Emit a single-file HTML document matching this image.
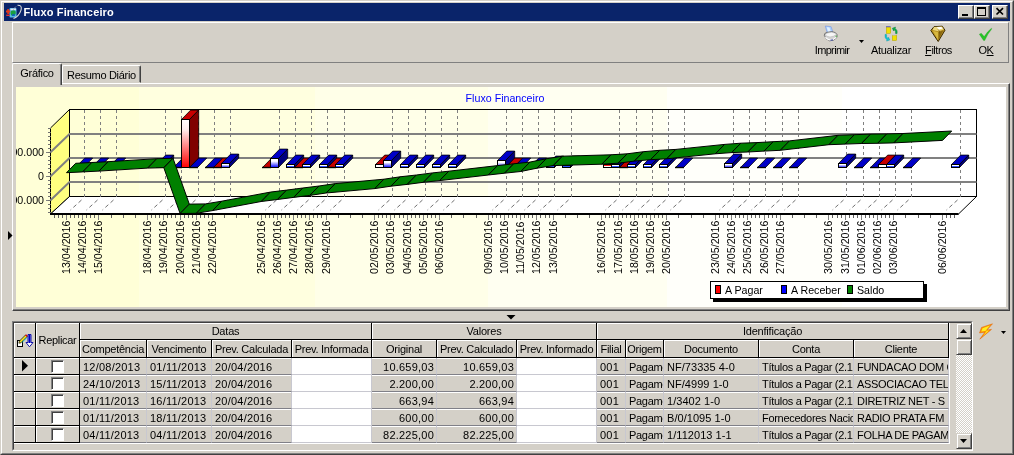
<!DOCTYPE html>
<html><head><meta charset="utf-8"><title>Fluxo Financeiro</title>
<style>
html,body{margin:0;padding:0}
body{width:1014px;height:455px;background:#d4d0c8;font-family:"Liberation Sans",sans-serif;font-size:11px;color:#000;position:relative;overflow:hidden}
div{position:absolute;box-sizing:border-box}
svg text{font-family:"Liberation Sans",sans-serif}
.title{left:4px;top:3px;width:1006px;height:18px;background:#0a246a}
.title b{position:absolute;left:19.5px;top:3px;color:#fff;font-size:11px;font-weight:bold;letter-spacing:.15px}
.wb{top:5px;width:16px;height:14px;background:#d4d0c8;border:1px solid;border-color:#fff #404040 #404040 #fff;box-shadow:inset -1px -1px 0 #808080}
.h{background:#d4d0c8;border-right:1px solid #000;border-bottom:1px solid #000;box-shadow:inset 1px 1px 0 #fff;text-align:center;white-space:nowrap;overflow:hidden}
.c{background:#d4d0c8;border-right:1px solid #c8c8d0;border-bottom:1px solid #808088;box-shadow:inset 0 1px 0 #fff;line-height:18px;padding-left:3px;white-space:nowrap;overflow:hidden;letter-spacing:-.3px}
.c.w{background:#fff;border-bottom-color:#c8c8d0}
.c.r{text-align:right;padding-right:2px}
.c.n{letter-spacing:.22px}
.c.d{letter-spacing:.05px}
.cb{position:absolute;left:15px;top:2px;width:13px;height:13px;background:#fff;border:1px solid;border-color:#808080 #fff #fff #808080;box-shadow:inset 1px 1px 0 #404040;box-sizing:border-box}
.sb{width:16px;height:16px;background:#d4d0c8;border:1px solid;border-color:#d4d0c8 #404040 #404040 #d4d0c8;box-shadow:inset 1px 1px 0 #fff,inset -1px -1px 0 #808080}
.tb{text-align:center;white-space:nowrap}
</style></head><body>
<div id="w" style="left:0;top:0;width:1014px;height:455px;will-change:transform">
<!-- window frame -->
<div style="left:0;top:0;width:1014px;height:455px;border:1px solid;border-color:#d4d0c8 #404040 #404040 #d4d0c8"></div>
<div style="left:1px;top:1px;width:1012px;height:453px;border:1px solid;border-color:#fff #808080 #808080 #fff"></div>
<div class="title"><b>Fluxo Financeiro</b></div>
<div class="wb" style="left:958px"></div><div class="wb" style="left:974px"></div><div class="wb" style="left:992px"></div>
<!-- toolbar -->
<div style="left:12px;top:22px;width:997px;height:41px;border:1px solid;border-color:#fff #808080 #808080 #fff"></div>
<div class="tb" style="left:805px;top:44px;width:54px;letter-spacing:-.65px">Imprimir</div>
<div class="tb" style="left:864px;top:44px;width:54px;letter-spacing:-.3px">Atualizar</div>
<div class="tb" style="left:918.5px;top:44px;width:40px;letter-spacing:-.45px"><u>F</u>iltros</div>
<div class="tb" style="left:966px;top:44px;width:40px;letter-spacing:-.4px">O<u>K</u></div>
<!-- tabs -->
<div style="left:12px;top:83px;width:998px;height:228px;border:1px solid;border-color:#fff #404040 #404040 #fff;box-shadow:inset -1px -1px 0 #808080"></div>
<div style="left:62px;top:65px;width:79px;height:18px;border:1px solid;border-color:#fff #404040 transparent #fff;border-radius:2px 2px 0 0;box-shadow:inset -1px 0 0 #808080;text-align:center;line-height:19px;letter-spacing:-.3px">Resumo Diário</div>
<div style="left:12px;top:63px;width:50px;height:22px;background:#d4d0c8;border:1px solid;border-color:#fff #404040 #d4d0c8 #fff;border-bottom:none;border-radius:2px 2px 0 0;box-shadow:inset -1px 0 0 #808080;text-align:center;line-height:18px;letter-spacing:-.3px">Gráfico</div>
<!-- chart panel -->
<div style="left:16px;top:87px;width:990px;height:220px;background:linear-gradient(to right,#ffffd7 123px,#ffffdf 123px,#ffffdf 299px,#ffffe8 299px,#ffffe8 472px,#fffff1 472px,#fffff1 651px,#fffffa 651px,#fffffa 826px,#fff 826px)"></div>
<svg width="1014" height="455" viewBox="0 0 1014 455" style="position:absolute;left:0;top:0">
<defs><linearGradient id="gr" x1="0" y1="0" x2="0" y2="1"><stop offset="0" stop-color="#fff"/><stop offset="0.2" stop-color="#fff0f0"/><stop offset="1" stop-color="#f00"/></linearGradient><linearGradient id="gb" x1="0" y1="0" x2="0" y2="1"><stop offset="0" stop-color="#fff"/><stop offset="0.3" stop-color="#fff"/><stop offset="1" stop-color="#00f"/></linearGradient><linearGradient id="gs" x1="0" y1="0" x2="0" y2="1"><stop offset="0.5" stop-color="#fff"/><stop offset="0.5" stop-color="#3050ff"/></linearGradient><linearGradient id="gt" x1="0" y1="0" x2="0" y2="1"><stop offset="0.5" stop-color="#ff2020"/><stop offset="0.5" stop-color="#fff"/></linearGradient></defs>
<polygon points="50.5,128.0 69.5,109.5 69.5,196.5 50.5,214.0" fill="#ffff80" stroke="#000" stroke-width="1"/>
<polygon points="50.5,214.0 69.5,196.5 976.5,196.5 958.5,214.0" fill="#fff" stroke="#000" stroke-width="1"/>
<rect x="69.5" y="109.5" width="907.0" height="87.0" fill="none" stroke="#000" stroke-width="1"/>
<line x1="84.5" y1="110.0" x2="84.5" y2="196.5" stroke="#808080" stroke-width="1" stroke-dasharray="3 3" shape-rendering="crispEdges"/>
<line x1="81.5" y1="200.0" x2="70.5" y2="210.0" stroke="#707070" stroke-width="1" stroke-dasharray="4 3"/>
<line x1="100.5" y1="110.0" x2="100.5" y2="196.5" stroke="#808080" stroke-width="1" stroke-dasharray="3 3" shape-rendering="crispEdges"/>
<line x1="97.5" y1="200.0" x2="86.5" y2="210.0" stroke="#707070" stroke-width="1" stroke-dasharray="4 3"/>
<line x1="116.5" y1="110.0" x2="116.5" y2="196.5" stroke="#808080" stroke-width="1" stroke-dasharray="3 3" shape-rendering="crispEdges"/>
<line x1="113.5" y1="200.0" x2="102.5" y2="210.0" stroke="#707070" stroke-width="1" stroke-dasharray="4 3"/>
<line x1="165.5" y1="110.0" x2="165.5" y2="196.5" stroke="#808080" stroke-width="1" stroke-dasharray="3 3" shape-rendering="crispEdges"/>
<line x1="162.5" y1="200.0" x2="151.5" y2="210.0" stroke="#707070" stroke-width="1" stroke-dasharray="4 3"/>
<line x1="181.5" y1="110.0" x2="181.5" y2="196.5" stroke="#808080" stroke-width="1" stroke-dasharray="3 3" shape-rendering="crispEdges"/>
<line x1="178.5" y1="200.0" x2="167.5" y2="210.0" stroke="#707070" stroke-width="1" stroke-dasharray="4 3"/>
<line x1="198.5" y1="110.0" x2="198.5" y2="196.5" stroke="#808080" stroke-width="1" stroke-dasharray="3 3" shape-rendering="crispEdges"/>
<line x1="195.5" y1="200.0" x2="184.5" y2="210.0" stroke="#707070" stroke-width="1" stroke-dasharray="4 3"/>
<line x1="214.5" y1="110.0" x2="214.5" y2="196.5" stroke="#808080" stroke-width="1" stroke-dasharray="3 3" shape-rendering="crispEdges"/>
<line x1="211.5" y1="200.0" x2="200.5" y2="210.0" stroke="#707070" stroke-width="1" stroke-dasharray="4 3"/>
<line x1="230.5" y1="110.0" x2="230.5" y2="196.5" stroke="#808080" stroke-width="1" stroke-dasharray="3 3" shape-rendering="crispEdges"/>
<line x1="227.5" y1="200.0" x2="216.5" y2="210.0" stroke="#707070" stroke-width="1" stroke-dasharray="4 3"/>
<line x1="279.5" y1="110.0" x2="279.5" y2="196.5" stroke="#808080" stroke-width="1" stroke-dasharray="3 3" shape-rendering="crispEdges"/>
<line x1="276.5" y1="200.0" x2="265.5" y2="210.0" stroke="#707070" stroke-width="1" stroke-dasharray="4 3"/>
<line x1="295.5" y1="110.0" x2="295.5" y2="196.5" stroke="#808080" stroke-width="1" stroke-dasharray="3 3" shape-rendering="crispEdges"/>
<line x1="292.5" y1="200.0" x2="281.5" y2="210.0" stroke="#707070" stroke-width="1" stroke-dasharray="4 3"/>
<line x1="311.5" y1="110.0" x2="311.5" y2="196.5" stroke="#808080" stroke-width="1" stroke-dasharray="3 3" shape-rendering="crispEdges"/>
<line x1="308.5" y1="200.0" x2="297.5" y2="210.0" stroke="#707070" stroke-width="1" stroke-dasharray="4 3"/>
<line x1="327.5" y1="110.0" x2="327.5" y2="196.5" stroke="#808080" stroke-width="1" stroke-dasharray="3 3" shape-rendering="crispEdges"/>
<line x1="324.5" y1="200.0" x2="313.5" y2="210.0" stroke="#707070" stroke-width="1" stroke-dasharray="4 3"/>
<line x1="344.5" y1="110.0" x2="344.5" y2="196.5" stroke="#808080" stroke-width="1" stroke-dasharray="3 3" shape-rendering="crispEdges"/>
<line x1="341.5" y1="200.0" x2="330.5" y2="210.0" stroke="#707070" stroke-width="1" stroke-dasharray="4 3"/>
<line x1="392.5" y1="110.0" x2="392.5" y2="196.5" stroke="#808080" stroke-width="1" stroke-dasharray="3 3" shape-rendering="crispEdges"/>
<line x1="389.5" y1="200.0" x2="378.5" y2="210.0" stroke="#707070" stroke-width="1" stroke-dasharray="4 3"/>
<line x1="408.5" y1="110.0" x2="408.5" y2="196.5" stroke="#808080" stroke-width="1" stroke-dasharray="3 3" shape-rendering="crispEdges"/>
<line x1="405.5" y1="200.0" x2="394.5" y2="210.0" stroke="#707070" stroke-width="1" stroke-dasharray="4 3"/>
<line x1="425.5" y1="110.0" x2="425.5" y2="196.5" stroke="#808080" stroke-width="1" stroke-dasharray="3 3" shape-rendering="crispEdges"/>
<line x1="422.5" y1="200.0" x2="411.5" y2="210.0" stroke="#707070" stroke-width="1" stroke-dasharray="4 3"/>
<line x1="441.5" y1="110.0" x2="441.5" y2="196.5" stroke="#808080" stroke-width="1" stroke-dasharray="3 3" shape-rendering="crispEdges"/>
<line x1="438.5" y1="200.0" x2="427.5" y2="210.0" stroke="#707070" stroke-width="1" stroke-dasharray="4 3"/>
<line x1="457.5" y1="110.0" x2="457.5" y2="196.5" stroke="#808080" stroke-width="1" stroke-dasharray="3 3" shape-rendering="crispEdges"/>
<line x1="454.5" y1="200.0" x2="443.5" y2="210.0" stroke="#707070" stroke-width="1" stroke-dasharray="4 3"/>
<line x1="506.5" y1="110.0" x2="506.5" y2="196.5" stroke="#808080" stroke-width="1" stroke-dasharray="3 3" shape-rendering="crispEdges"/>
<line x1="503.5" y1="200.0" x2="492.5" y2="210.0" stroke="#707070" stroke-width="1" stroke-dasharray="4 3"/>
<line x1="522.5" y1="110.0" x2="522.5" y2="196.5" stroke="#808080" stroke-width="1" stroke-dasharray="3 3" shape-rendering="crispEdges"/>
<line x1="519.5" y1="200.0" x2="508.5" y2="210.0" stroke="#707070" stroke-width="1" stroke-dasharray="4 3"/>
<line x1="538.5" y1="110.0" x2="538.5" y2="196.5" stroke="#808080" stroke-width="1" stroke-dasharray="3 3" shape-rendering="crispEdges"/>
<line x1="535.5" y1="200.0" x2="524.5" y2="210.0" stroke="#707070" stroke-width="1" stroke-dasharray="4 3"/>
<line x1="554.5" y1="110.0" x2="554.5" y2="196.5" stroke="#808080" stroke-width="1" stroke-dasharray="3 3" shape-rendering="crispEdges"/>
<line x1="551.5" y1="200.0" x2="540.5" y2="210.0" stroke="#707070" stroke-width="1" stroke-dasharray="4 3"/>
<line x1="571.5" y1="110.0" x2="571.5" y2="196.5" stroke="#808080" stroke-width="1" stroke-dasharray="3 3" shape-rendering="crispEdges"/>
<line x1="568.5" y1="200.0" x2="557.5" y2="210.0" stroke="#707070" stroke-width="1" stroke-dasharray="4 3"/>
<line x1="619.5" y1="110.0" x2="619.5" y2="196.5" stroke="#808080" stroke-width="1" stroke-dasharray="3 3" shape-rendering="crispEdges"/>
<line x1="616.5" y1="200.0" x2="605.5" y2="210.0" stroke="#707070" stroke-width="1" stroke-dasharray="4 3"/>
<line x1="636.5" y1="110.0" x2="636.5" y2="196.5" stroke="#808080" stroke-width="1" stroke-dasharray="3 3" shape-rendering="crispEdges"/>
<line x1="633.5" y1="200.0" x2="622.5" y2="210.0" stroke="#707070" stroke-width="1" stroke-dasharray="4 3"/>
<line x1="652.5" y1="110.0" x2="652.5" y2="196.5" stroke="#808080" stroke-width="1" stroke-dasharray="3 3" shape-rendering="crispEdges"/>
<line x1="649.5" y1="200.0" x2="638.5" y2="210.0" stroke="#707070" stroke-width="1" stroke-dasharray="4 3"/>
<line x1="668.5" y1="110.0" x2="668.5" y2="196.5" stroke="#808080" stroke-width="1" stroke-dasharray="3 3" shape-rendering="crispEdges"/>
<line x1="665.5" y1="200.0" x2="654.5" y2="210.0" stroke="#707070" stroke-width="1" stroke-dasharray="4 3"/>
<line x1="684.5" y1="110.0" x2="684.5" y2="196.5" stroke="#808080" stroke-width="1" stroke-dasharray="3 3" shape-rendering="crispEdges"/>
<line x1="681.5" y1="200.0" x2="670.5" y2="210.0" stroke="#707070" stroke-width="1" stroke-dasharray="4 3"/>
<line x1="733.5" y1="110.0" x2="733.5" y2="196.5" stroke="#808080" stroke-width="1" stroke-dasharray="3 3" shape-rendering="crispEdges"/>
<line x1="730.5" y1="200.0" x2="719.5" y2="210.0" stroke="#707070" stroke-width="1" stroke-dasharray="4 3"/>
<line x1="749.5" y1="110.0" x2="749.5" y2="196.5" stroke="#808080" stroke-width="1" stroke-dasharray="3 3" shape-rendering="crispEdges"/>
<line x1="746.5" y1="200.0" x2="735.5" y2="210.0" stroke="#707070" stroke-width="1" stroke-dasharray="4 3"/>
<line x1="765.5" y1="110.0" x2="765.5" y2="196.5" stroke="#808080" stroke-width="1" stroke-dasharray="3 3" shape-rendering="crispEdges"/>
<line x1="762.5" y1="200.0" x2="751.5" y2="210.0" stroke="#707070" stroke-width="1" stroke-dasharray="4 3"/>
<line x1="782.5" y1="110.0" x2="782.5" y2="196.5" stroke="#808080" stroke-width="1" stroke-dasharray="3 3" shape-rendering="crispEdges"/>
<line x1="779.5" y1="200.0" x2="768.5" y2="210.0" stroke="#707070" stroke-width="1" stroke-dasharray="4 3"/>
<line x1="798.5" y1="110.0" x2="798.5" y2="196.5" stroke="#808080" stroke-width="1" stroke-dasharray="3 3" shape-rendering="crispEdges"/>
<line x1="795.5" y1="200.0" x2="784.5" y2="210.0" stroke="#707070" stroke-width="1" stroke-dasharray="4 3"/>
<line x1="846.5" y1="110.0" x2="846.5" y2="196.5" stroke="#808080" stroke-width="1" stroke-dasharray="3 3" shape-rendering="crispEdges"/>
<line x1="843.5" y1="200.0" x2="832.5" y2="210.0" stroke="#707070" stroke-width="1" stroke-dasharray="4 3"/>
<line x1="863.5" y1="110.0" x2="863.5" y2="196.5" stroke="#808080" stroke-width="1" stroke-dasharray="3 3" shape-rendering="crispEdges"/>
<line x1="860.5" y1="200.0" x2="849.5" y2="210.0" stroke="#707070" stroke-width="1" stroke-dasharray="4 3"/>
<line x1="879.5" y1="110.0" x2="879.5" y2="196.5" stroke="#808080" stroke-width="1" stroke-dasharray="3 3" shape-rendering="crispEdges"/>
<line x1="876.5" y1="200.0" x2="865.5" y2="210.0" stroke="#707070" stroke-width="1" stroke-dasharray="4 3"/>
<line x1="895.5" y1="110.0" x2="895.5" y2="196.5" stroke="#808080" stroke-width="1" stroke-dasharray="3 3" shape-rendering="crispEdges"/>
<line x1="892.5" y1="200.0" x2="881.5" y2="210.0" stroke="#707070" stroke-width="1" stroke-dasharray="4 3"/>
<line x1="911.5" y1="110.0" x2="911.5" y2="196.5" stroke="#808080" stroke-width="1" stroke-dasharray="3 3" shape-rendering="crispEdges"/>
<line x1="908.5" y1="200.0" x2="897.5" y2="210.0" stroke="#707070" stroke-width="1" stroke-dasharray="4 3"/>
<line x1="960.5" y1="110.0" x2="960.5" y2="196.5" stroke="#808080" stroke-width="1" stroke-dasharray="3 3" shape-rendering="crispEdges"/>
<line x1="957.5" y1="200.0" x2="946.5" y2="210.0" stroke="#707070" stroke-width="1" stroke-dasharray="4 3"/>
<polyline points="50.5,152.2 69.5,134.0 976.5,134.0" fill="none" stroke="#808080" stroke-width="2"/>
<polyline points="50.5,176.2 69.5,158.0 976.5,158.0" fill="none" stroke="#808080" stroke-width="2"/>
<polyline points="50.5,200.2 69.5,182.0 976.5,182.0" fill="none" stroke="#808080" stroke-width="2"/>
<line x1="50.0" y1="214.0" x2="958.5" y2="214.0" stroke="#000" stroke-width="2"/>
<polygon points="75.5,167.5 84.7,158.1 92.7,158.1 83.5,167.5" fill="#0000c8" stroke="#000" stroke-width="0.8"/><line x1="75.0" y1="167.5" x2="84.0" y2="167.5" stroke="#000" stroke-width="1.4"/>
<polygon points="91.5,167.5 100.7,158.1 108.7,158.1 99.5,167.5" fill="#0000c8" stroke="#000" stroke-width="0.8"/><line x1="91.0" y1="167.5" x2="100.0" y2="167.5" stroke="#000" stroke-width="1.4"/>
<polygon points="108.5,167.5 117.7,158.1 125.7,158.1 116.5,167.5" fill="#0000c8" stroke="#000" stroke-width="0.8"/><line x1="108.0" y1="167.5" x2="117.0" y2="167.5" stroke="#000" stroke-width="1.4"/>
<polygon points="156.5,164.5 165.7,155.1 173.7,155.1 164.5,164.5" fill="#0000c8" stroke="#000" stroke-width="0.8"/><polygon points="164.5,164.5 173.7,155.1 173.7,158.1 164.5,167.5" fill="#000080" stroke="#000" stroke-width="0.8"/><rect x="156.5" y="164.5" width="8" height="3.0" fill="#fff" stroke="#000" stroke-width="1"/>
<polygon points="173.5,167.5 182.7,158.1 190.7,158.1 181.5,167.5" fill="#0000c8" stroke="#000" stroke-width="0.8"/><line x1="173.0" y1="167.5" x2="182.0" y2="167.5" stroke="#000" stroke-width="1.4"/>
<polygon points="181.5,119.5 190.7,110.1 198.7,110.1 189.5,119.5" fill="#c80000" stroke="#000" stroke-width="0.8"/><polygon points="189.5,119.5 198.7,110.1 198.7,158.1 189.5,167.5" fill="#800000" stroke="#000" stroke-width="0.8"/><rect x="181.5" y="119.5" width="8" height="48.0" fill="url(#gr)" stroke="#000" stroke-width="1"/>
<polygon points="189.5,167.5 198.7,158.1 206.7,158.1 197.5,167.5" fill="#0000c8" stroke="#000" stroke-width="0.8"/><line x1="189.0" y1="167.5" x2="198.0" y2="167.5" stroke="#000" stroke-width="1.4"/>
<polygon points="205.5,167.5 214.7,158.1 222.7,158.1 213.5,167.5" fill="#0000c8" stroke="#000" stroke-width="0.8"/><line x1="205.0" y1="167.5" x2="214.0" y2="167.5" stroke="#000" stroke-width="1.4"/>
<polygon points="213.5,167.5 222.7,158.1 230.7,158.1 221.5,167.5" fill="#c80000" stroke="#000" stroke-width="0.8"/><line x1="213.0" y1="167.5" x2="222.0" y2="167.5" stroke="#000" stroke-width="1.4"/>
<polygon points="221.5,163.5 230.7,154.1 238.7,154.1 229.5,163.5" fill="#0000c8" stroke="#000" stroke-width="0.8"/><polygon points="229.5,163.5 238.7,154.1 238.7,158.1 229.5,167.5" fill="#000080" stroke="#000" stroke-width="0.8"/><rect x="221.5" y="163.5" width="8" height="4.0" fill="url(#gb)" stroke="#000" stroke-width="1"/>
<polygon points="262.5,167.5 271.7,158.1 279.7,158.1 270.5,167.5" fill="#c80000" stroke="#000" stroke-width="0.8"/><line x1="262.0" y1="167.5" x2="271.0" y2="167.5" stroke="#000" stroke-width="1.4"/>
<polygon points="270.5,158.5 279.7,149.1 287.7,149.1 278.5,158.5" fill="#0000c8" stroke="#000" stroke-width="0.8"/><polygon points="278.5,158.5 287.7,149.1 287.7,158.1 278.5,167.5" fill="#000080" stroke="#000" stroke-width="0.8"/><rect x="270.5" y="158.5" width="8" height="9.0" fill="url(#gb)" stroke="#000" stroke-width="1"/>
<polygon points="286.5,164.5 295.7,155.1 303.7,155.1 294.5,164.5" fill="#0000c8" stroke="#000" stroke-width="0.8"/><polygon points="294.5,164.5 303.7,155.1 303.7,158.1 294.5,167.5" fill="#000080" stroke="#000" stroke-width="0.8"/><rect x="286.5" y="164.5" width="8" height="3.0" fill="url(#gs)" stroke="#000" stroke-width="1"/>
<polygon points="294.5,167.5 303.7,158.1 311.7,158.1 302.5,167.5" fill="#c80000" stroke="#000" stroke-width="0.8"/><line x1="294.0" y1="167.5" x2="303.0" y2="167.5" stroke="#000" stroke-width="1.4"/>
<polygon points="302.5,164.5 311.7,155.1 319.7,155.1 310.5,164.5" fill="#0000c8" stroke="#000" stroke-width="0.8"/><polygon points="310.5,164.5 319.7,155.1 319.7,158.1 310.5,167.5" fill="#000080" stroke="#000" stroke-width="0.8"/><rect x="302.5" y="164.5" width="8" height="3.0" fill="url(#gs)" stroke="#000" stroke-width="1"/>
<polygon points="319.5,164.5 328.7,155.1 336.7,155.1 327.5,164.5" fill="#0000c8" stroke="#000" stroke-width="0.8"/><polygon points="327.5,164.5 336.7,155.1 336.7,158.1 327.5,167.5" fill="#000080" stroke="#000" stroke-width="0.8"/><rect x="319.5" y="164.5" width="8" height="3.0" fill="url(#gs)" stroke="#000" stroke-width="1"/>
<polygon points="327.5,167.5 336.7,158.1 344.7,158.1 335.5,167.5" fill="#c80000" stroke="#000" stroke-width="0.8"/><line x1="327.0" y1="167.5" x2="336.0" y2="167.5" stroke="#000" stroke-width="1.4"/>
<polygon points="335.5,164.5 344.7,155.1 352.7,155.1 343.5,164.5" fill="#0000c8" stroke="#000" stroke-width="0.8"/><polygon points="343.5,164.5 352.7,155.1 352.7,158.1 343.5,167.5" fill="#000080" stroke="#000" stroke-width="0.8"/><rect x="335.5" y="164.5" width="8" height="3.0" fill="url(#gs)" stroke="#000" stroke-width="1"/>
<polygon points="375.5,164.5 384.7,155.1 392.7,155.1 383.5,164.5" fill="#c80000" stroke="#000" stroke-width="0.8"/><polygon points="383.5,164.5 392.7,155.1 392.7,158.1 383.5,167.5" fill="#800000" stroke="#000" stroke-width="0.8"/><rect x="375.5" y="164.5" width="8" height="3.0" fill="#fff" stroke="#000" stroke-width="1"/>
<polygon points="383.5,160.5 392.7,151.1 400.7,151.1 391.5,160.5" fill="#0000c8" stroke="#000" stroke-width="0.8"/><polygon points="391.5,160.5 400.7,151.1 400.7,158.1 391.5,167.5" fill="#000080" stroke="#000" stroke-width="0.8"/><rect x="383.5" y="160.5" width="8" height="7.0" fill="url(#gb)" stroke="#000" stroke-width="1"/>
<polygon points="400.5,164.5 409.7,155.1 417.7,155.1 408.5,164.5" fill="#0000c8" stroke="#000" stroke-width="0.8"/><polygon points="408.5,164.5 417.7,155.1 417.7,158.1 408.5,167.5" fill="#000080" stroke="#000" stroke-width="0.8"/><rect x="400.5" y="164.5" width="8" height="3.0" fill="url(#gs)" stroke="#000" stroke-width="1"/>
<polygon points="416.5,164.5 425.7,155.1 433.7,155.1 424.5,164.5" fill="#0000c8" stroke="#000" stroke-width="0.8"/><polygon points="424.5,164.5 433.7,155.1 433.7,158.1 424.5,167.5" fill="#000080" stroke="#000" stroke-width="0.8"/><rect x="416.5" y="164.5" width="8" height="3.0" fill="url(#gs)" stroke="#000" stroke-width="1"/>
<polygon points="432.5,164.5 441.7,155.1 449.7,155.1 440.5,164.5" fill="#0000c8" stroke="#000" stroke-width="0.8"/><polygon points="440.5,164.5 449.7,155.1 449.7,158.1 440.5,167.5" fill="#000080" stroke="#000" stroke-width="0.8"/><rect x="432.5" y="164.5" width="8" height="3.0" fill="url(#gs)" stroke="#000" stroke-width="1"/>
<polygon points="448.5,164.5 457.7,155.1 465.7,155.1 456.5,164.5" fill="#0000c8" stroke="#000" stroke-width="0.8"/><polygon points="456.5,164.5 465.7,155.1 465.7,158.1 456.5,167.5" fill="#000080" stroke="#000" stroke-width="0.8"/><rect x="448.5" y="164.5" width="8" height="3.0" fill="url(#gs)" stroke="#000" stroke-width="1"/>
<polygon points="497.5,160.5 506.7,151.1 514.7,151.1 505.5,160.5" fill="#0000c8" stroke="#000" stroke-width="0.8"/><polygon points="505.5,160.5 514.7,151.1 514.7,158.1 505.5,167.5" fill="#000080" stroke="#000" stroke-width="0.8"/><rect x="497.5" y="160.5" width="8" height="7.0" fill="url(#gb)" stroke="#000" stroke-width="1"/>
<polygon points="505.5,167.5 514.7,158.1 522.7,158.1 513.5,167.5" fill="#c80000" stroke="#000" stroke-width="0.8"/><line x1="505.0" y1="167.5" x2="514.0" y2="167.5" stroke="#000" stroke-width="1.4"/>
<polygon points="513.5,167.5 522.7,158.1 530.7,158.1 521.5,167.5" fill="#0000c8" stroke="#000" stroke-width="0.8"/><line x1="513.0" y1="167.5" x2="522.0" y2="167.5" stroke="#000" stroke-width="1.4"/>
<polygon points="529.5,167.5 538.7,158.1 546.7,158.1 537.5,167.5" fill="#0000c8" stroke="#000" stroke-width="0.8"/><line x1="529.0" y1="167.5" x2="538.0" y2="167.5" stroke="#000" stroke-width="1.4"/>
<polygon points="546.5,165.5 555.7,156.1 563.7,156.1 554.5,165.5" fill="#0000c8" stroke="#000" stroke-width="0.8"/><polygon points="554.5,165.5 563.7,156.1 563.7,158.1 554.5,167.5" fill="#000080" stroke="#000" stroke-width="0.8"/><rect x="546.5" y="165.5" width="8" height="2.0" fill="url(#gs)" stroke="#000" stroke-width="1"/>
<polygon points="562.5,165.5 571.7,156.1 579.7,156.1 570.5,165.5" fill="#0000c8" stroke="#000" stroke-width="0.8"/><polygon points="570.5,165.5 579.7,156.1 579.7,158.1 570.5,167.5" fill="#000080" stroke="#000" stroke-width="0.8"/><rect x="562.5" y="165.5" width="8" height="2.0" fill="url(#gs)" stroke="#000" stroke-width="1"/>
<polygon points="603.5,164.5 612.7,155.1 620.7,155.1 611.5,164.5" fill="#c80000" stroke="#000" stroke-width="0.8"/><polygon points="611.5,164.5 620.7,155.1 620.7,158.1 611.5,167.5" fill="#800000" stroke="#000" stroke-width="0.8"/><rect x="603.5" y="164.5" width="8" height="3.0" fill="url(#gt)" stroke="#000" stroke-width="1"/>
<polygon points="611.5,164.5 620.7,155.1 628.7,155.1 619.5,164.5" fill="#0000c8" stroke="#000" stroke-width="0.8"/><polygon points="619.5,164.5 628.7,155.1 628.7,158.1 619.5,167.5" fill="#000080" stroke="#000" stroke-width="0.8"/><rect x="611.5" y="164.5" width="8" height="3.0" fill="url(#gs)" stroke="#000" stroke-width="1"/>
<polygon points="619.5,167.5 628.7,158.1 636.7,158.1 627.5,167.5" fill="#c80000" stroke="#000" stroke-width="0.8"/><line x1="619.0" y1="167.5" x2="628.0" y2="167.5" stroke="#000" stroke-width="1.4"/>
<polygon points="627.5,164.5 636.7,155.1 644.7,155.1 635.5,164.5" fill="#0000c8" stroke="#000" stroke-width="0.8"/><polygon points="635.5,164.5 644.7,155.1 644.7,158.1 635.5,167.5" fill="#000080" stroke="#000" stroke-width="0.8"/><rect x="627.5" y="164.5" width="8" height="3.0" fill="url(#gs)" stroke="#000" stroke-width="1"/>
<polygon points="643.5,164.5 652.7,155.1 660.7,155.1 651.5,164.5" fill="#0000c8" stroke="#000" stroke-width="0.8"/><polygon points="651.5,164.5 660.7,155.1 660.7,158.1 651.5,167.5" fill="#000080" stroke="#000" stroke-width="0.8"/><rect x="643.5" y="164.5" width="8" height="3.0" fill="url(#gs)" stroke="#000" stroke-width="1"/>
<polygon points="659.5,164.5 668.7,155.1 676.7,155.1 667.5,164.5" fill="#0000c8" stroke="#000" stroke-width="0.8"/><polygon points="667.5,164.5 676.7,155.1 676.7,158.1 667.5,167.5" fill="#000080" stroke="#000" stroke-width="0.8"/><rect x="659.5" y="164.5" width="8" height="3.0" fill="url(#gs)" stroke="#000" stroke-width="1"/>
<polygon points="675.5,167.5 684.7,158.1 692.7,158.1 683.5,167.5" fill="#0000c8" stroke="#000" stroke-width="0.8"/><line x1="675.0" y1="167.5" x2="684.0" y2="167.5" stroke="#000" stroke-width="1.4"/>
<polygon points="724.5,163.5 733.7,154.1 741.7,154.1 732.5,163.5" fill="#0000c8" stroke="#000" stroke-width="0.8"/><polygon points="732.5,163.5 741.7,154.1 741.7,158.1 732.5,167.5" fill="#000080" stroke="#000" stroke-width="0.8"/><rect x="724.5" y="163.5" width="8" height="4.0" fill="url(#gb)" stroke="#000" stroke-width="1"/>
<polygon points="740.5,167.5 749.7,158.1 757.7,158.1 748.5,167.5" fill="#0000c8" stroke="#000" stroke-width="0.8"/><line x1="740.0" y1="167.5" x2="749.0" y2="167.5" stroke="#000" stroke-width="1.4"/>
<polygon points="757.5,167.5 766.7,158.1 774.7,158.1 765.5,167.5" fill="#0000c8" stroke="#000" stroke-width="0.8"/><line x1="757.0" y1="167.5" x2="766.0" y2="167.5" stroke="#000" stroke-width="1.4"/>
<polygon points="773.5,167.5 782.7,158.1 790.7,158.1 781.5,167.5" fill="#0000c8" stroke="#000" stroke-width="0.8"/><line x1="773.0" y1="167.5" x2="782.0" y2="167.5" stroke="#000" stroke-width="1.4"/>
<polygon points="789.5,167.5 798.7,158.1 806.7,158.1 797.5,167.5" fill="#0000c8" stroke="#000" stroke-width="0.8"/><line x1="789.0" y1="167.5" x2="798.0" y2="167.5" stroke="#000" stroke-width="1.4"/>
<polygon points="838.5,163.5 847.7,154.1 855.7,154.1 846.5,163.5" fill="#0000c8" stroke="#000" stroke-width="0.8"/><polygon points="846.5,163.5 855.7,154.1 855.7,158.1 846.5,167.5" fill="#000080" stroke="#000" stroke-width="0.8"/><rect x="838.5" y="163.5" width="8" height="4.0" fill="url(#gb)" stroke="#000" stroke-width="1"/>
<polygon points="854.5,167.5 863.7,158.1 871.7,158.1 862.5,167.5" fill="#0000c8" stroke="#000" stroke-width="0.8"/><line x1="854.0" y1="167.5" x2="863.0" y2="167.5" stroke="#000" stroke-width="1.4"/>
<polygon points="870.5,167.5 879.7,158.1 887.7,158.1 878.5,167.5" fill="#0000c8" stroke="#000" stroke-width="0.8"/><line x1="870.0" y1="167.5" x2="879.0" y2="167.5" stroke="#000" stroke-width="1.4"/>
<polygon points="878.5,164.5 887.7,155.1 895.7,155.1 886.5,164.5" fill="#c80000" stroke="#000" stroke-width="0.8"/><polygon points="886.5,164.5 895.7,155.1 895.7,158.1 886.5,167.5" fill="#800000" stroke="#000" stroke-width="0.8"/><rect x="878.5" y="164.5" width="8" height="3.0" fill="#fff" stroke="#000" stroke-width="1"/>
<polygon points="886.5,164.5 895.7,155.1 903.7,155.1 894.5,164.5" fill="#0000c8" stroke="#000" stroke-width="0.8"/><polygon points="894.5,164.5 903.7,155.1 903.7,158.1 894.5,167.5" fill="#000080" stroke="#000" stroke-width="0.8"/><rect x="886.5" y="164.5" width="8" height="3.0" fill="url(#gs)" stroke="#000" stroke-width="1"/>
<polygon points="903.5,167.5 912.7,158.1 920.7,158.1 911.5,167.5" fill="#0000c8" stroke="#000" stroke-width="0.8"/><line x1="903.0" y1="167.5" x2="912.0" y2="167.5" stroke="#000" stroke-width="1.4"/>
<polygon points="951.5,164.5 960.7,155.1 968.7,155.1 959.5,164.5" fill="#0000c8" stroke="#000" stroke-width="0.8"/><polygon points="959.5,164.5 968.7,155.1 968.7,158.1 959.5,167.5" fill="#000080" stroke="#000" stroke-width="0.8"/><rect x="951.5" y="164.5" width="8" height="3.0" fill="url(#gs)" stroke="#000" stroke-width="1"/>
<polygon points="66.5,172.7 82.7,171.9 91.9,162.5 75.7,163.3" fill="#008000" stroke="#000" stroke-width="1"/>
<polygon points="82.7,171.9 98.9,171.1 108.1,161.7 91.9,162.5" fill="#008000" stroke="#000" stroke-width="1"/>
<polygon points="98.9,171.1 147.6,168.1 156.8,158.7 108.1,161.7" fill="#008000" stroke="#000" stroke-width="1"/>
<polygon points="147.6,168.1 163.8,167.7 173.0,158.3 156.8,158.7" fill="#008000" stroke="#000" stroke-width="1"/>
<polygon points="163.8,167.7 180.1,213.5 189.3,204.1 173.0,158.3" fill="#008000" stroke="#000" stroke-width="1"/>
<polygon points="180.1,213.5 196.3,213.3 205.5,203.9 189.3,204.1" fill="#008000" stroke="#000" stroke-width="1"/>
<polygon points="196.3,213.3 212.5,210.6 221.7,201.2 205.5,203.9" fill="#008000" stroke="#000" stroke-width="1"/>
<polygon points="212.5,210.6 261.2,201.5 270.4,192.1 221.7,201.2" fill="#008000" stroke="#000" stroke-width="1"/>
<polygon points="261.2,201.5 277.4,199.5 286.6,190.1 270.4,192.1" fill="#008000" stroke="#000" stroke-width="1"/>
<polygon points="277.4,199.5 293.6,197.4 302.8,188.0 286.6,190.1" fill="#008000" stroke="#000" stroke-width="1"/>
<polygon points="293.6,197.4 309.8,195.4 319.0,186.0 302.8,188.0" fill="#008000" stroke="#000" stroke-width="1"/>
<polygon points="309.8,195.4 326.1,193.0 335.3,183.6 319.0,186.0" fill="#008000" stroke="#000" stroke-width="1"/>
<polygon points="326.1,193.0 374.7,188.6 383.9,179.2 335.3,183.6" fill="#008000" stroke="#000" stroke-width="1"/>
<polygon points="374.7,188.6 390.9,186.2 400.1,176.8 383.9,179.2" fill="#008000" stroke="#000" stroke-width="1"/>
<polygon points="390.9,186.2 407.2,184.4 416.4,175.0 400.1,176.8" fill="#008000" stroke="#000" stroke-width="1"/>
<polygon points="407.2,184.4 423.4,182.3 432.6,172.9 416.4,175.0" fill="#008000" stroke="#000" stroke-width="1"/>
<polygon points="423.4,182.3 439.6,180.6 448.8,171.2 432.6,172.9" fill="#008000" stroke="#000" stroke-width="1"/>
<polygon points="439.6,180.6 488.3,175.0 497.5,165.6 448.8,171.2" fill="#008000" stroke="#000" stroke-width="1"/>
<polygon points="488.3,175.0 504.5,173.2 513.7,163.8 497.5,165.6" fill="#008000" stroke="#000" stroke-width="1"/>
<polygon points="504.5,173.2 520.7,171.5 529.9,162.1 513.7,163.8" fill="#008000" stroke="#000" stroke-width="1"/>
<polygon points="520.7,171.5 536.9,168.2 546.1,158.8 529.9,162.1" fill="#008000" stroke="#000" stroke-width="1"/>
<polygon points="536.9,168.2 553.2,165.6 562.4,156.2 546.1,158.8" fill="#008000" stroke="#000" stroke-width="1"/>
<polygon points="553.2,165.6 601.8,164.2 611.0,154.8 562.4,156.2" fill="#008000" stroke="#000" stroke-width="1"/>
<polygon points="601.8,164.2 618.0,163.2 627.2,153.8 611.0,154.8" fill="#008000" stroke="#000" stroke-width="1"/>
<polygon points="618.0,163.2 634.3,161.1 643.5,151.7 627.2,153.8" fill="#008000" stroke="#000" stroke-width="1"/>
<polygon points="634.3,161.1 650.5,159.7 659.7,150.3 643.5,151.7" fill="#008000" stroke="#000" stroke-width="1"/>
<polygon points="650.5,159.7 666.7,158.8 675.9,149.4 659.7,150.3" fill="#008000" stroke="#000" stroke-width="1"/>
<polygon points="666.7,158.8 715.4,153.8 724.6,144.4 675.9,149.4" fill="#008000" stroke="#000" stroke-width="1"/>
<polygon points="715.4,153.8 731.6,152.6 740.8,143.2 724.6,144.4" fill="#008000" stroke="#000" stroke-width="1"/>
<polygon points="731.6,152.6 747.8,152.0 757.0,142.6 740.8,143.2" fill="#008000" stroke="#000" stroke-width="1"/>
<polygon points="747.8,152.0 764.0,151.1 773.2,141.7 757.0,142.6" fill="#008000" stroke="#000" stroke-width="1"/>
<polygon points="764.0,151.1 780.3,150.3 789.5,140.9 773.2,141.7" fill="#008000" stroke="#000" stroke-width="1"/>
<polygon points="780.3,150.3 828.9,144.7 838.1,135.3 789.5,140.9" fill="#008000" stroke="#000" stroke-width="1"/>
<polygon points="828.9,144.7 845.2,144.1 854.4,134.7 838.1,135.3" fill="#008000" stroke="#000" stroke-width="1"/>
<polygon points="845.2,144.1 861.4,143.5 870.6,134.1 854.4,134.7" fill="#008000" stroke="#000" stroke-width="1"/>
<polygon points="861.4,143.5 877.6,143.3 886.8,133.9 870.6,134.1" fill="#008000" stroke="#000" stroke-width="1"/>
<polygon points="877.6,143.3 893.8,142.9 903.0,133.5 886.8,133.9" fill="#008000" stroke="#000" stroke-width="1"/>
<polygon points="893.8,142.9 942.5,140.4 951.7,131.0 903.0,133.5" fill="#008000" stroke="#000" stroke-width="1"/>
<line x1="66.5" y1="215.0" x2="66.5" y2="220.0" stroke="#808080" stroke-width="1" shape-rendering="crispEdges"/>
<text transform="translate(70.1,274.0) rotate(-90)" font-size="10.67" fill="#000">13/04/2016</text>
<line x1="82.5" y1="215.0" x2="82.5" y2="220.0" stroke="#808080" stroke-width="1" shape-rendering="crispEdges"/>
<text transform="translate(86.1,274.0) rotate(-90)" font-size="10.67" fill="#000">14/04/2016</text>
<line x1="98.5" y1="215.0" x2="98.5" y2="220.0" stroke="#808080" stroke-width="1" shape-rendering="crispEdges"/>
<text transform="translate(102.1,274.0) rotate(-90)" font-size="10.67" fill="#000">15/04/2016</text>
<line x1="147.5" y1="215.0" x2="147.5" y2="220.0" stroke="#808080" stroke-width="1" shape-rendering="crispEdges"/>
<text transform="translate(151.1,274.0) rotate(-90)" font-size="10.67" fill="#000">18/04/2016</text>
<line x1="163.5" y1="215.0" x2="163.5" y2="220.0" stroke="#808080" stroke-width="1" shape-rendering="crispEdges"/>
<text transform="translate(167.1,274.0) rotate(-90)" font-size="10.67" fill="#000">19/04/2016</text>
<line x1="180.5" y1="215.0" x2="180.5" y2="220.0" stroke="#808080" stroke-width="1" shape-rendering="crispEdges"/>
<text transform="translate(184.1,274.0) rotate(-90)" font-size="10.67" fill="#000">20/04/2016</text>
<line x1="196.5" y1="215.0" x2="196.5" y2="220.0" stroke="#808080" stroke-width="1" shape-rendering="crispEdges"/>
<text transform="translate(200.1,274.0) rotate(-90)" font-size="10.67" fill="#000">21/04/2016</text>
<line x1="212.5" y1="215.0" x2="212.5" y2="220.0" stroke="#808080" stroke-width="1" shape-rendering="crispEdges"/>
<text transform="translate(216.1,274.0) rotate(-90)" font-size="10.67" fill="#000">22/04/2016</text>
<line x1="261.5" y1="215.0" x2="261.5" y2="220.0" stroke="#808080" stroke-width="1" shape-rendering="crispEdges"/>
<text transform="translate(265.1,274.0) rotate(-90)" font-size="10.67" fill="#000">25/04/2016</text>
<line x1="277.5" y1="215.0" x2="277.5" y2="220.0" stroke="#808080" stroke-width="1" shape-rendering="crispEdges"/>
<text transform="translate(281.1,274.0) rotate(-90)" font-size="10.67" fill="#000">26/04/2016</text>
<line x1="293.5" y1="215.0" x2="293.5" y2="220.0" stroke="#808080" stroke-width="1" shape-rendering="crispEdges"/>
<text transform="translate(297.1,274.0) rotate(-90)" font-size="10.67" fill="#000">27/04/2016</text>
<line x1="309.5" y1="215.0" x2="309.5" y2="220.0" stroke="#808080" stroke-width="1" shape-rendering="crispEdges"/>
<text transform="translate(313.1,274.0) rotate(-90)" font-size="10.67" fill="#000">28/04/2016</text>
<line x1="326.5" y1="215.0" x2="326.5" y2="220.0" stroke="#808080" stroke-width="1" shape-rendering="crispEdges"/>
<text transform="translate(330.1,274.0) rotate(-90)" font-size="10.67" fill="#000">29/04/2016</text>
<line x1="374.5" y1="215.0" x2="374.5" y2="220.0" stroke="#808080" stroke-width="1" shape-rendering="crispEdges"/>
<text transform="translate(378.1,274.0) rotate(-90)" font-size="10.67" fill="#000">02/05/2016</text>
<line x1="390.5" y1="215.0" x2="390.5" y2="220.0" stroke="#808080" stroke-width="1" shape-rendering="crispEdges"/>
<text transform="translate(394.1,274.0) rotate(-90)" font-size="10.67" fill="#000">03/05/2016</text>
<line x1="407.5" y1="215.0" x2="407.5" y2="220.0" stroke="#808080" stroke-width="1" shape-rendering="crispEdges"/>
<text transform="translate(411.1,274.0) rotate(-90)" font-size="10.67" fill="#000">04/05/2016</text>
<line x1="423.5" y1="215.0" x2="423.5" y2="220.0" stroke="#808080" stroke-width="1" shape-rendering="crispEdges"/>
<text transform="translate(427.1,274.0) rotate(-90)" font-size="10.67" fill="#000">05/05/2016</text>
<line x1="439.5" y1="215.0" x2="439.5" y2="220.0" stroke="#808080" stroke-width="1" shape-rendering="crispEdges"/>
<text transform="translate(443.1,274.0) rotate(-90)" font-size="10.67" fill="#000">06/05/2016</text>
<line x1="488.5" y1="215.0" x2="488.5" y2="220.0" stroke="#808080" stroke-width="1" shape-rendering="crispEdges"/>
<text transform="translate(492.1,274.0) rotate(-90)" font-size="10.67" fill="#000">09/05/2016</text>
<line x1="504.5" y1="215.0" x2="504.5" y2="220.0" stroke="#808080" stroke-width="1" shape-rendering="crispEdges"/>
<text transform="translate(508.1,274.0) rotate(-90)" font-size="10.67" fill="#000">10/05/2016</text>
<line x1="520.5" y1="215.0" x2="520.5" y2="220.0" stroke="#808080" stroke-width="1" shape-rendering="crispEdges"/>
<text transform="translate(524.1,274.0) rotate(-90)" font-size="10.67" fill="#000">11/05/2016</text>
<line x1="536.5" y1="215.0" x2="536.5" y2="220.0" stroke="#808080" stroke-width="1" shape-rendering="crispEdges"/>
<text transform="translate(540.1,274.0) rotate(-90)" font-size="10.67" fill="#000">12/05/2016</text>
<line x1="553.5" y1="215.0" x2="553.5" y2="220.0" stroke="#808080" stroke-width="1" shape-rendering="crispEdges"/>
<text transform="translate(557.1,274.0) rotate(-90)" font-size="10.67" fill="#000">13/05/2016</text>
<line x1="601.5" y1="215.0" x2="601.5" y2="220.0" stroke="#808080" stroke-width="1" shape-rendering="crispEdges"/>
<text transform="translate(605.1,274.0) rotate(-90)" font-size="10.67" fill="#000">16/05/2016</text>
<line x1="618.5" y1="215.0" x2="618.5" y2="220.0" stroke="#808080" stroke-width="1" shape-rendering="crispEdges"/>
<text transform="translate(622.1,274.0) rotate(-90)" font-size="10.67" fill="#000">17/05/2016</text>
<line x1="634.5" y1="215.0" x2="634.5" y2="220.0" stroke="#808080" stroke-width="1" shape-rendering="crispEdges"/>
<text transform="translate(638.1,274.0) rotate(-90)" font-size="10.67" fill="#000">18/05/2016</text>
<line x1="650.5" y1="215.0" x2="650.5" y2="220.0" stroke="#808080" stroke-width="1" shape-rendering="crispEdges"/>
<text transform="translate(654.1,274.0) rotate(-90)" font-size="10.67" fill="#000">19/05/2016</text>
<line x1="666.5" y1="215.0" x2="666.5" y2="220.0" stroke="#808080" stroke-width="1" shape-rendering="crispEdges"/>
<text transform="translate(670.1,274.0) rotate(-90)" font-size="10.67" fill="#000">20/05/2016</text>
<line x1="715.5" y1="215.0" x2="715.5" y2="220.0" stroke="#808080" stroke-width="1" shape-rendering="crispEdges"/>
<text transform="translate(719.1,274.0) rotate(-90)" font-size="10.67" fill="#000">23/05/2016</text>
<line x1="731.5" y1="215.0" x2="731.5" y2="220.0" stroke="#808080" stroke-width="1" shape-rendering="crispEdges"/>
<text transform="translate(735.1,274.0) rotate(-90)" font-size="10.67" fill="#000">24/05/2016</text>
<line x1="747.5" y1="215.0" x2="747.5" y2="220.0" stroke="#808080" stroke-width="1" shape-rendering="crispEdges"/>
<text transform="translate(751.1,274.0) rotate(-90)" font-size="10.67" fill="#000">25/05/2016</text>
<line x1="764.5" y1="215.0" x2="764.5" y2="220.0" stroke="#808080" stroke-width="1" shape-rendering="crispEdges"/>
<text transform="translate(768.1,274.0) rotate(-90)" font-size="10.67" fill="#000">26/05/2016</text>
<line x1="780.5" y1="215.0" x2="780.5" y2="220.0" stroke="#808080" stroke-width="1" shape-rendering="crispEdges"/>
<text transform="translate(784.1,274.0) rotate(-90)" font-size="10.67" fill="#000">27/05/2016</text>
<line x1="828.5" y1="215.0" x2="828.5" y2="220.0" stroke="#808080" stroke-width="1" shape-rendering="crispEdges"/>
<text transform="translate(832.1,274.0) rotate(-90)" font-size="10.67" fill="#000">30/05/2016</text>
<line x1="845.5" y1="215.0" x2="845.5" y2="220.0" stroke="#808080" stroke-width="1" shape-rendering="crispEdges"/>
<text transform="translate(849.1,274.0) rotate(-90)" font-size="10.67" fill="#000">31/05/2016</text>
<line x1="861.5" y1="215.0" x2="861.5" y2="220.0" stroke="#808080" stroke-width="1" shape-rendering="crispEdges"/>
<text transform="translate(865.1,274.0) rotate(-90)" font-size="10.67" fill="#000">01/06/2016</text>
<line x1="877.5" y1="215.0" x2="877.5" y2="220.0" stroke="#808080" stroke-width="1" shape-rendering="crispEdges"/>
<text transform="translate(881.1,274.0) rotate(-90)" font-size="10.67" fill="#000">02/06/2016</text>
<line x1="893.5" y1="215.0" x2="893.5" y2="220.0" stroke="#808080" stroke-width="1" shape-rendering="crispEdges"/>
<text transform="translate(897.1,274.0) rotate(-90)" font-size="10.67" fill="#000">03/06/2016</text>
<line x1="942.5" y1="215.0" x2="942.5" y2="220.0" stroke="#808080" stroke-width="1" shape-rendering="crispEdges"/>
<text transform="translate(946.1,274.0) rotate(-90)" font-size="10.67" fill="#000">06/06/2016</text>
<line x1="70.5" y1="215.0" x2="70.5" y2="218.0" stroke="#606060" stroke-width="1" shape-rendering="crispEdges"/>
<line x1="74.5" y1="215.0" x2="74.5" y2="218.0" stroke="#606060" stroke-width="1" shape-rendering="crispEdges"/>
<line x1="78.5" y1="215.0" x2="78.5" y2="218.0" stroke="#606060" stroke-width="1" shape-rendering="crispEdges"/>
<line x1="86.5" y1="215.0" x2="86.5" y2="218.0" stroke="#606060" stroke-width="1" shape-rendering="crispEdges"/>
<line x1="90.5" y1="215.0" x2="90.5" y2="218.0" stroke="#606060" stroke-width="1" shape-rendering="crispEdges"/>
<line x1="94.5" y1="215.0" x2="94.5" y2="218.0" stroke="#606060" stroke-width="1" shape-rendering="crispEdges"/>
<line x1="111.5" y1="215.0" x2="111.5" y2="218.0" stroke="#606060" stroke-width="1" shape-rendering="crispEdges"/>
<line x1="123.5" y1="215.0" x2="123.5" y2="218.0" stroke="#606060" stroke-width="1" shape-rendering="crispEdges"/>
<line x1="135.5" y1="215.0" x2="135.5" y2="218.0" stroke="#606060" stroke-width="1" shape-rendering="crispEdges"/>
<line x1="151.5" y1="215.0" x2="151.5" y2="218.0" stroke="#606060" stroke-width="1" shape-rendering="crispEdges"/>
<line x1="155.5" y1="215.0" x2="155.5" y2="218.0" stroke="#606060" stroke-width="1" shape-rendering="crispEdges"/>
<line x1="159.5" y1="215.0" x2="159.5" y2="218.0" stroke="#606060" stroke-width="1" shape-rendering="crispEdges"/>
<line x1="167.5" y1="215.0" x2="167.5" y2="218.0" stroke="#606060" stroke-width="1" shape-rendering="crispEdges"/>
<line x1="171.5" y1="215.0" x2="171.5" y2="218.0" stroke="#606060" stroke-width="1" shape-rendering="crispEdges"/>
<line x1="175.5" y1="215.0" x2="175.5" y2="218.0" stroke="#606060" stroke-width="1" shape-rendering="crispEdges"/>
<line x1="184.5" y1="215.0" x2="184.5" y2="218.0" stroke="#606060" stroke-width="1" shape-rendering="crispEdges"/>
<line x1="188.5" y1="215.0" x2="188.5" y2="218.0" stroke="#606060" stroke-width="1" shape-rendering="crispEdges"/>
<line x1="192.5" y1="215.0" x2="192.5" y2="218.0" stroke="#606060" stroke-width="1" shape-rendering="crispEdges"/>
<line x1="200.5" y1="215.0" x2="200.5" y2="218.0" stroke="#606060" stroke-width="1" shape-rendering="crispEdges"/>
<line x1="204.5" y1="215.0" x2="204.5" y2="218.0" stroke="#606060" stroke-width="1" shape-rendering="crispEdges"/>
<line x1="208.5" y1="215.0" x2="208.5" y2="218.0" stroke="#606060" stroke-width="1" shape-rendering="crispEdges"/>
<line x1="224.5" y1="215.0" x2="224.5" y2="218.0" stroke="#606060" stroke-width="1" shape-rendering="crispEdges"/>
<line x1="236.5" y1="215.0" x2="236.5" y2="218.0" stroke="#606060" stroke-width="1" shape-rendering="crispEdges"/>
<line x1="248.5" y1="215.0" x2="248.5" y2="218.0" stroke="#606060" stroke-width="1" shape-rendering="crispEdges"/>
<line x1="265.5" y1="215.0" x2="265.5" y2="218.0" stroke="#606060" stroke-width="1" shape-rendering="crispEdges"/>
<line x1="269.5" y1="215.0" x2="269.5" y2="218.0" stroke="#606060" stroke-width="1" shape-rendering="crispEdges"/>
<line x1="273.5" y1="215.0" x2="273.5" y2="218.0" stroke="#606060" stroke-width="1" shape-rendering="crispEdges"/>
<line x1="281.5" y1="215.0" x2="281.5" y2="218.0" stroke="#606060" stroke-width="1" shape-rendering="crispEdges"/>
<line x1="285.5" y1="215.0" x2="285.5" y2="218.0" stroke="#606060" stroke-width="1" shape-rendering="crispEdges"/>
<line x1="289.5" y1="215.0" x2="289.5" y2="218.0" stroke="#606060" stroke-width="1" shape-rendering="crispEdges"/>
<line x1="297.5" y1="215.0" x2="297.5" y2="218.0" stroke="#606060" stroke-width="1" shape-rendering="crispEdges"/>
<line x1="301.5" y1="215.0" x2="301.5" y2="218.0" stroke="#606060" stroke-width="1" shape-rendering="crispEdges"/>
<line x1="305.5" y1="215.0" x2="305.5" y2="218.0" stroke="#606060" stroke-width="1" shape-rendering="crispEdges"/>
<line x1="313.5" y1="215.0" x2="313.5" y2="218.0" stroke="#606060" stroke-width="1" shape-rendering="crispEdges"/>
<line x1="317.5" y1="215.0" x2="317.5" y2="218.0" stroke="#606060" stroke-width="1" shape-rendering="crispEdges"/>
<line x1="321.5" y1="215.0" x2="321.5" y2="218.0" stroke="#606060" stroke-width="1" shape-rendering="crispEdges"/>
<line x1="338.5" y1="215.0" x2="338.5" y2="218.0" stroke="#606060" stroke-width="1" shape-rendering="crispEdges"/>
<line x1="350.5" y1="215.0" x2="350.5" y2="218.0" stroke="#606060" stroke-width="1" shape-rendering="crispEdges"/>
<line x1="362.5" y1="215.0" x2="362.5" y2="218.0" stroke="#606060" stroke-width="1" shape-rendering="crispEdges"/>
<line x1="378.5" y1="215.0" x2="378.5" y2="218.0" stroke="#606060" stroke-width="1" shape-rendering="crispEdges"/>
<line x1="382.5" y1="215.0" x2="382.5" y2="218.0" stroke="#606060" stroke-width="1" shape-rendering="crispEdges"/>
<line x1="386.5" y1="215.0" x2="386.5" y2="218.0" stroke="#606060" stroke-width="1" shape-rendering="crispEdges"/>
<line x1="394.5" y1="215.0" x2="394.5" y2="218.0" stroke="#606060" stroke-width="1" shape-rendering="crispEdges"/>
<line x1="399.5" y1="215.0" x2="399.5" y2="218.0" stroke="#606060" stroke-width="1" shape-rendering="crispEdges"/>
<line x1="403.5" y1="215.0" x2="403.5" y2="218.0" stroke="#606060" stroke-width="1" shape-rendering="crispEdges"/>
<line x1="411.5" y1="215.0" x2="411.5" y2="218.0" stroke="#606060" stroke-width="1" shape-rendering="crispEdges"/>
<line x1="415.5" y1="215.0" x2="415.5" y2="218.0" stroke="#606060" stroke-width="1" shape-rendering="crispEdges"/>
<line x1="419.5" y1="215.0" x2="419.5" y2="218.0" stroke="#606060" stroke-width="1" shape-rendering="crispEdges"/>
<line x1="427.5" y1="215.0" x2="427.5" y2="218.0" stroke="#606060" stroke-width="1" shape-rendering="crispEdges"/>
<line x1="431.5" y1="215.0" x2="431.5" y2="218.0" stroke="#606060" stroke-width="1" shape-rendering="crispEdges"/>
<line x1="435.5" y1="215.0" x2="435.5" y2="218.0" stroke="#606060" stroke-width="1" shape-rendering="crispEdges"/>
<line x1="451.5" y1="215.0" x2="451.5" y2="218.0" stroke="#606060" stroke-width="1" shape-rendering="crispEdges"/>
<line x1="463.5" y1="215.0" x2="463.5" y2="218.0" stroke="#606060" stroke-width="1" shape-rendering="crispEdges"/>
<line x1="476.5" y1="215.0" x2="476.5" y2="218.0" stroke="#606060" stroke-width="1" shape-rendering="crispEdges"/>
<line x1="492.5" y1="215.0" x2="492.5" y2="218.0" stroke="#606060" stroke-width="1" shape-rendering="crispEdges"/>
<line x1="496.5" y1="215.0" x2="496.5" y2="218.0" stroke="#606060" stroke-width="1" shape-rendering="crispEdges"/>
<line x1="500.5" y1="215.0" x2="500.5" y2="218.0" stroke="#606060" stroke-width="1" shape-rendering="crispEdges"/>
<line x1="508.5" y1="215.0" x2="508.5" y2="218.0" stroke="#606060" stroke-width="1" shape-rendering="crispEdges"/>
<line x1="512.5" y1="215.0" x2="512.5" y2="218.0" stroke="#606060" stroke-width="1" shape-rendering="crispEdges"/>
<line x1="516.5" y1="215.0" x2="516.5" y2="218.0" stroke="#606060" stroke-width="1" shape-rendering="crispEdges"/>
<line x1="524.5" y1="215.0" x2="524.5" y2="218.0" stroke="#606060" stroke-width="1" shape-rendering="crispEdges"/>
<line x1="528.5" y1="215.0" x2="528.5" y2="218.0" stroke="#606060" stroke-width="1" shape-rendering="crispEdges"/>
<line x1="532.5" y1="215.0" x2="532.5" y2="218.0" stroke="#606060" stroke-width="1" shape-rendering="crispEdges"/>
<line x1="540.5" y1="215.0" x2="540.5" y2="218.0" stroke="#606060" stroke-width="1" shape-rendering="crispEdges"/>
<line x1="545.5" y1="215.0" x2="545.5" y2="218.0" stroke="#606060" stroke-width="1" shape-rendering="crispEdges"/>
<line x1="549.5" y1="215.0" x2="549.5" y2="218.0" stroke="#606060" stroke-width="1" shape-rendering="crispEdges"/>
<line x1="565.5" y1="215.0" x2="565.5" y2="218.0" stroke="#606060" stroke-width="1" shape-rendering="crispEdges"/>
<line x1="577.5" y1="215.0" x2="577.5" y2="218.0" stroke="#606060" stroke-width="1" shape-rendering="crispEdges"/>
<line x1="589.5" y1="215.0" x2="589.5" y2="218.0" stroke="#606060" stroke-width="1" shape-rendering="crispEdges"/>
<line x1="605.5" y1="215.0" x2="605.5" y2="218.0" stroke="#606060" stroke-width="1" shape-rendering="crispEdges"/>
<line x1="609.5" y1="215.0" x2="609.5" y2="218.0" stroke="#606060" stroke-width="1" shape-rendering="crispEdges"/>
<line x1="613.5" y1="215.0" x2="613.5" y2="218.0" stroke="#606060" stroke-width="1" shape-rendering="crispEdges"/>
<line x1="622.5" y1="215.0" x2="622.5" y2="218.0" stroke="#606060" stroke-width="1" shape-rendering="crispEdges"/>
<line x1="626.5" y1="215.0" x2="626.5" y2="218.0" stroke="#606060" stroke-width="1" shape-rendering="crispEdges"/>
<line x1="630.5" y1="215.0" x2="630.5" y2="218.0" stroke="#606060" stroke-width="1" shape-rendering="crispEdges"/>
<line x1="638.5" y1="215.0" x2="638.5" y2="218.0" stroke="#606060" stroke-width="1" shape-rendering="crispEdges"/>
<line x1="642.5" y1="215.0" x2="642.5" y2="218.0" stroke="#606060" stroke-width="1" shape-rendering="crispEdges"/>
<line x1="646.5" y1="215.0" x2="646.5" y2="218.0" stroke="#606060" stroke-width="1" shape-rendering="crispEdges"/>
<line x1="654.5" y1="215.0" x2="654.5" y2="218.0" stroke="#606060" stroke-width="1" shape-rendering="crispEdges"/>
<line x1="658.5" y1="215.0" x2="658.5" y2="218.0" stroke="#606060" stroke-width="1" shape-rendering="crispEdges"/>
<line x1="662.5" y1="215.0" x2="662.5" y2="218.0" stroke="#606060" stroke-width="1" shape-rendering="crispEdges"/>
<line x1="678.5" y1="215.0" x2="678.5" y2="218.0" stroke="#606060" stroke-width="1" shape-rendering="crispEdges"/>
<line x1="691.5" y1="215.0" x2="691.5" y2="218.0" stroke="#606060" stroke-width="1" shape-rendering="crispEdges"/>
<line x1="703.5" y1="215.0" x2="703.5" y2="218.0" stroke="#606060" stroke-width="1" shape-rendering="crispEdges"/>
<line x1="719.5" y1="215.0" x2="719.5" y2="218.0" stroke="#606060" stroke-width="1" shape-rendering="crispEdges"/>
<line x1="723.5" y1="215.0" x2="723.5" y2="218.0" stroke="#606060" stroke-width="1" shape-rendering="crispEdges"/>
<line x1="727.5" y1="215.0" x2="727.5" y2="218.0" stroke="#606060" stroke-width="1" shape-rendering="crispEdges"/>
<line x1="735.5" y1="215.0" x2="735.5" y2="218.0" stroke="#606060" stroke-width="1" shape-rendering="crispEdges"/>
<line x1="739.5" y1="215.0" x2="739.5" y2="218.0" stroke="#606060" stroke-width="1" shape-rendering="crispEdges"/>
<line x1="743.5" y1="215.0" x2="743.5" y2="218.0" stroke="#606060" stroke-width="1" shape-rendering="crispEdges"/>
<line x1="751.5" y1="215.0" x2="751.5" y2="218.0" stroke="#606060" stroke-width="1" shape-rendering="crispEdges"/>
<line x1="755.5" y1="215.0" x2="755.5" y2="218.0" stroke="#606060" stroke-width="1" shape-rendering="crispEdges"/>
<line x1="759.5" y1="215.0" x2="759.5" y2="218.0" stroke="#606060" stroke-width="1" shape-rendering="crispEdges"/>
<line x1="768.5" y1="215.0" x2="768.5" y2="218.0" stroke="#606060" stroke-width="1" shape-rendering="crispEdges"/>
<line x1="772.5" y1="215.0" x2="772.5" y2="218.0" stroke="#606060" stroke-width="1" shape-rendering="crispEdges"/>
<line x1="776.5" y1="215.0" x2="776.5" y2="218.0" stroke="#606060" stroke-width="1" shape-rendering="crispEdges"/>
<line x1="792.5" y1="215.0" x2="792.5" y2="218.0" stroke="#606060" stroke-width="1" shape-rendering="crispEdges"/>
<line x1="804.5" y1="215.0" x2="804.5" y2="218.0" stroke="#606060" stroke-width="1" shape-rendering="crispEdges"/>
<line x1="816.5" y1="215.0" x2="816.5" y2="218.0" stroke="#606060" stroke-width="1" shape-rendering="crispEdges"/>
<line x1="832.5" y1="215.0" x2="832.5" y2="218.0" stroke="#606060" stroke-width="1" shape-rendering="crispEdges"/>
<line x1="837.5" y1="215.0" x2="837.5" y2="218.0" stroke="#606060" stroke-width="1" shape-rendering="crispEdges"/>
<line x1="841.5" y1="215.0" x2="841.5" y2="218.0" stroke="#606060" stroke-width="1" shape-rendering="crispEdges"/>
<line x1="849.5" y1="215.0" x2="849.5" y2="218.0" stroke="#606060" stroke-width="1" shape-rendering="crispEdges"/>
<line x1="853.5" y1="215.0" x2="853.5" y2="218.0" stroke="#606060" stroke-width="1" shape-rendering="crispEdges"/>
<line x1="857.5" y1="215.0" x2="857.5" y2="218.0" stroke="#606060" stroke-width="1" shape-rendering="crispEdges"/>
<line x1="865.5" y1="215.0" x2="865.5" y2="218.0" stroke="#606060" stroke-width="1" shape-rendering="crispEdges"/>
<line x1="869.5" y1="215.0" x2="869.5" y2="218.0" stroke="#606060" stroke-width="1" shape-rendering="crispEdges"/>
<line x1="873.5" y1="215.0" x2="873.5" y2="218.0" stroke="#606060" stroke-width="1" shape-rendering="crispEdges"/>
<line x1="881.5" y1="215.0" x2="881.5" y2="218.0" stroke="#606060" stroke-width="1" shape-rendering="crispEdges"/>
<line x1="885.5" y1="215.0" x2="885.5" y2="218.0" stroke="#606060" stroke-width="1" shape-rendering="crispEdges"/>
<line x1="889.5" y1="215.0" x2="889.5" y2="218.0" stroke="#606060" stroke-width="1" shape-rendering="crispEdges"/>
<line x1="905.5" y1="215.0" x2="905.5" y2="218.0" stroke="#606060" stroke-width="1" shape-rendering="crispEdges"/>
<line x1="918.5" y1="215.0" x2="918.5" y2="218.0" stroke="#606060" stroke-width="1" shape-rendering="crispEdges"/>
<line x1="930.5" y1="215.0" x2="930.5" y2="218.0" stroke="#606060" stroke-width="1" shape-rendering="crispEdges"/>
<line x1="62.5" y1="215.0" x2="62.5" y2="218.0" stroke="#606060" stroke-width="1" shape-rendering="crispEdges"/>
<line x1="58.5" y1="215.0" x2="58.5" y2="218.0" stroke="#606060" stroke-width="1" shape-rendering="crispEdges"/>
<line x1="54.5" y1="215.0" x2="54.5" y2="218.0" stroke="#606060" stroke-width="1" shape-rendering="crispEdges"/>
<line x1="946.5" y1="215.0" x2="946.5" y2="218.0" stroke="#606060" stroke-width="1" shape-rendering="crispEdges"/>
<line x1="950.5" y1="215.0" x2="950.5" y2="218.0" stroke="#606060" stroke-width="1" shape-rendering="crispEdges"/>
<line x1="954.5" y1="215.0" x2="954.5" y2="218.0" stroke="#606060" stroke-width="1" shape-rendering="crispEdges"/>
<clipPath id="cp"><rect x="16" y="87" width="990" height="220"/></clipPath>
<text x="44" y="156.0" font-size="10.67" text-anchor="end" fill="#000" clip-path="url(#cp)">100.000</text>
<line x1="45.5" y1="152.5" x2="50.5" y2="152.5" stroke="#808080" shape-rendering="crispEdges"/>
<text x="44" y="180.0" font-size="10.67" text-anchor="end" fill="#000" clip-path="url(#cp)">0</text>
<line x1="45.5" y1="176.5" x2="50.5" y2="176.5" stroke="#808080" shape-rendering="crispEdges"/>
<text x="44" y="204.0" font-size="10.67" text-anchor="end" fill="#000" clip-path="url(#cp)">-100.000</text>
<line x1="45.5" y1="200.5" x2="50.5" y2="200.5" stroke="#808080" shape-rendering="crispEdges"/>
<line x1="47.5" y1="128.5" x2="50.5" y2="128.5" stroke="#707070" shape-rendering="crispEdges"/>
<line x1="47.5" y1="132.5" x2="50.5" y2="132.5" stroke="#707070" shape-rendering="crispEdges"/>
<line x1="47.5" y1="136.5" x2="50.5" y2="136.5" stroke="#707070" shape-rendering="crispEdges"/>
<line x1="47.5" y1="140.5" x2="50.5" y2="140.5" stroke="#707070" shape-rendering="crispEdges"/>
<line x1="47.5" y1="144.5" x2="50.5" y2="144.5" stroke="#707070" shape-rendering="crispEdges"/>
<line x1="47.5" y1="148.5" x2="50.5" y2="148.5" stroke="#707070" shape-rendering="crispEdges"/>
<line x1="47.5" y1="152.5" x2="50.5" y2="152.5" stroke="#707070" shape-rendering="crispEdges"/>
<line x1="47.5" y1="156.5" x2="50.5" y2="156.5" stroke="#707070" shape-rendering="crispEdges"/>
<line x1="47.5" y1="160.5" x2="50.5" y2="160.5" stroke="#707070" shape-rendering="crispEdges"/>
<line x1="47.5" y1="164.5" x2="50.5" y2="164.5" stroke="#707070" shape-rendering="crispEdges"/>
<line x1="47.5" y1="168.5" x2="50.5" y2="168.5" stroke="#707070" shape-rendering="crispEdges"/>
<line x1="47.5" y1="172.5" x2="50.5" y2="172.5" stroke="#707070" shape-rendering="crispEdges"/>
<line x1="47.5" y1="176.5" x2="50.5" y2="176.5" stroke="#707070" shape-rendering="crispEdges"/>
<line x1="47.5" y1="180.5" x2="50.5" y2="180.5" stroke="#707070" shape-rendering="crispEdges"/>
<line x1="47.5" y1="184.5" x2="50.5" y2="184.5" stroke="#707070" shape-rendering="crispEdges"/>
<line x1="47.5" y1="188.5" x2="50.5" y2="188.5" stroke="#707070" shape-rendering="crispEdges"/>
<line x1="47.5" y1="192.5" x2="50.5" y2="192.5" stroke="#707070" shape-rendering="crispEdges"/>
<line x1="47.5" y1="196.5" x2="50.5" y2="196.5" stroke="#707070" shape-rendering="crispEdges"/>
<line x1="47.5" y1="200.5" x2="50.5" y2="200.5" stroke="#707070" shape-rendering="crispEdges"/>
<line x1="47.5" y1="204.5" x2="50.5" y2="204.5" stroke="#707070" shape-rendering="crispEdges"/>
<line x1="47.5" y1="208.5" x2="50.5" y2="208.5" stroke="#707070" shape-rendering="crispEdges"/>
<line x1="47.5" y1="212.5" x2="50.5" y2="212.5" stroke="#707070" shape-rendering="crispEdges"/>
<text x="505" y="102" font-size="10.67" text-anchor="middle" fill="#00f">Fluxo Financeiro</text>
<rect x="713" y="284" width="214" height="18" fill="#000"/>
<rect x="710.5" y="281.5" width="213" height="17" fill="#fff" stroke="#000"/>
<rect x="715.5" y="285.5" width="5" height="8" fill="#f00" stroke="#000" shape-rendering="crispEdges"/>
<text x="725" y="294" font-size="10.67" fill="#000">A Pagar</text>
<rect x="781.5" y="285.5" width="5" height="8" fill="#00f" stroke="#000" shape-rendering="crispEdges"/>
<text x="791" y="294" font-size="10.67" fill="#000">A Receber</text>
<rect x="847.5" y="285.5" width="5" height="8" fill="#008000" stroke="#000" shape-rendering="crispEdges"/>
<text x="857" y="294" font-size="10.67" fill="#000">Saldo</text>
<polygon points="506.5,315 515.5,315 511,319.5" fill="#000"/>
<polygon points="8,231 12.5,235.5 8,240" fill="#000"/>
</svg>
<!-- grid -->
<div style="left:12px;top:321px;width:961px;height:130px;border:1px solid;border-color:#808080 #fff #fff #808080"></div>
<div style="left:13px;top:322px;width:959px;height:128px;border:1px solid;border-color:#404040 #d4d0c8 #d4d0c8 #404040;background:#d4d0c8"></div>
<div class="h" style="left:14px;top:323px;width:22px;height:35px;line-height:35px;"></div>
<div class="h" style="left:36px;top:323px;width:44px;height:35px;line-height:35px;letter-spacing:-.3px;">Replicar</div>
<div class="h" style="left:80px;top:323px;width:292px;height:17px;line-height:17px;letter-spacing:-.2px;">Datas</div>
<div class="h" style="left:372px;top:323px;width:225px;height:17px;line-height:17px;letter-spacing:-.2px;">Valores</div>
<div class="h" style="left:597px;top:323px;width:352px;height:17px;line-height:17px;letter-spacing:-.2px;">Idenfificação</div>
<div class="h" style="left:80px;top:340px;width:67px;height:18px;line-height:18px;letter-spacing:-.25px;">Competência</div>
<div class="h" style="left:147px;top:340px;width:65px;height:18px;line-height:18px;letter-spacing:-.25px;">Vencimento</div>
<div class="h" style="left:212px;top:340px;width:80px;height:18px;line-height:18px;letter-spacing:-.25px;">Prev. Calculada</div>
<div class="h" style="left:292px;top:340px;width:80px;height:18px;line-height:18px;letter-spacing:-.25px;">Prev. Informada</div>
<div class="h" style="left:372px;top:340px;width:65px;height:18px;line-height:18px;letter-spacing:-.25px;">Original</div>
<div class="h" style="left:437px;top:340px;width:80px;height:18px;line-height:18px;letter-spacing:-.25px;">Prev. Calculado</div>
<div class="h" style="left:517px;top:340px;width:80px;height:18px;line-height:18px;letter-spacing:-.25px;">Prev. Informado</div>
<div class="h" style="left:597px;top:340px;width:29px;height:18px;line-height:18px;letter-spacing:-.25px;">Filial</div>
<div class="h" style="left:626px;top:340px;width:38px;height:18px;line-height:18px;letter-spacing:-.25px;">Origem</div>
<div class="h" style="left:664px;top:340px;width:95px;height:18px;line-height:18px;letter-spacing:-.25px;">Documento</div>
<div class="h" style="left:759px;top:340px;width:95px;height:18px;line-height:18px;letter-spacing:-.25px;">Conta</div>
<div class="h" style="left:854px;top:340px;width:95px;height:18px;line-height:18px;letter-spacing:-.25px;">Cliente</div>
<div class="h" style="left:14px;top:358px;width:22px;height:17px;line-height:17px;"></div>
<div class="h" style="left:36px;top:358px;width:44px;height:17px"><span class="cb"></span></div>
<div class="c n" style="left:80px;top:358px;width:67px;height:17px">12/08/2013</div>
<div class="c n" style="left:147px;top:358px;width:65px;height:17px">01/11/2013</div>
<div class="c n" style="left:212px;top:358px;width:80px;height:17px">20/04/2016</div>
<div class="c w" style="left:292px;top:358px;width:80px;height:17px"></div>
<div class="c r n" style="left:372px;top:358px;width:65px;height:17px">10.659,03</div>
<div class="c r n" style="left:437px;top:358px;width:80px;height:17px">10.659,03</div>
<div class="c w" style="left:517px;top:358px;width:80px;height:17px"></div>
<div class="c n" style="left:597px;top:358px;width:29px;height:17px">001</div>
<div class="c" style="left:626px;top:358px;width:38px;height:17px">Pagame</div>
<div class="c d" style="left:664px;top:358px;width:95px;height:17px">NF/73335 4-0</div>
<div class="c" style="left:759px;top:358px;width:95px;height:17px">Títulos a Pagar (2.1</div>
<div class="c" style="left:854px;top:358px;width:95px;height:17px">FUNDACAO DOM C</div>
<div class="h" style="left:14px;top:375px;width:22px;height:17px;line-height:17px;"></div>
<div class="h" style="left:36px;top:375px;width:44px;height:17px"><span class="cb"></span></div>
<div class="c n" style="left:80px;top:375px;width:67px;height:17px">24/10/2013</div>
<div class="c n" style="left:147px;top:375px;width:65px;height:17px">15/11/2013</div>
<div class="c n" style="left:212px;top:375px;width:80px;height:17px">20/04/2016</div>
<div class="c w" style="left:292px;top:375px;width:80px;height:17px"></div>
<div class="c r n" style="left:372px;top:375px;width:65px;height:17px">2.200,00</div>
<div class="c r n" style="left:437px;top:375px;width:80px;height:17px">2.200,00</div>
<div class="c w" style="left:517px;top:375px;width:80px;height:17px"></div>
<div class="c n" style="left:597px;top:375px;width:29px;height:17px">001</div>
<div class="c" style="left:626px;top:375px;width:38px;height:17px">Pagame</div>
<div class="c d" style="left:664px;top:375px;width:95px;height:17px">NF/4999 1-0</div>
<div class="c" style="left:759px;top:375px;width:95px;height:17px">Títulos a Pagar (2.1</div>
<div class="c" style="left:854px;top:375px;width:95px;height:17px">ASSOCIACAO TEL</div>
<div class="h" style="left:14px;top:392px;width:22px;height:17px;line-height:17px;"></div>
<div class="h" style="left:36px;top:392px;width:44px;height:17px"><span class="cb"></span></div>
<div class="c n" style="left:80px;top:392px;width:67px;height:17px">01/11/2013</div>
<div class="c n" style="left:147px;top:392px;width:65px;height:17px">16/11/2013</div>
<div class="c n" style="left:212px;top:392px;width:80px;height:17px">20/04/2016</div>
<div class="c w" style="left:292px;top:392px;width:80px;height:17px"></div>
<div class="c r n" style="left:372px;top:392px;width:65px;height:17px">663,94</div>
<div class="c r n" style="left:437px;top:392px;width:80px;height:17px">663,94</div>
<div class="c w" style="left:517px;top:392px;width:80px;height:17px"></div>
<div class="c n" style="left:597px;top:392px;width:29px;height:17px">001</div>
<div class="c" style="left:626px;top:392px;width:38px;height:17px">Pagame</div>
<div class="c d" style="left:664px;top:392px;width:95px;height:17px">1/3402 1-0</div>
<div class="c" style="left:759px;top:392px;width:95px;height:17px">Títulos a Pagar (2.1</div>
<div class="c" style="left:854px;top:392px;width:95px;height:17px">DIRETRIZ NET - S</div>
<div class="h" style="left:14px;top:409px;width:22px;height:17px;line-height:17px;"></div>
<div class="h" style="left:36px;top:409px;width:44px;height:17px"><span class="cb"></span></div>
<div class="c n" style="left:80px;top:409px;width:67px;height:17px">01/11/2013</div>
<div class="c n" style="left:147px;top:409px;width:65px;height:17px">18/11/2013</div>
<div class="c n" style="left:212px;top:409px;width:80px;height:17px">20/04/2016</div>
<div class="c w" style="left:292px;top:409px;width:80px;height:17px"></div>
<div class="c r n" style="left:372px;top:409px;width:65px;height:17px">600,00</div>
<div class="c r n" style="left:437px;top:409px;width:80px;height:17px">600,00</div>
<div class="c w" style="left:517px;top:409px;width:80px;height:17px"></div>
<div class="c n" style="left:597px;top:409px;width:29px;height:17px">001</div>
<div class="c" style="left:626px;top:409px;width:38px;height:17px">Pagame</div>
<div class="c d" style="left:664px;top:409px;width:95px;height:17px">B/0/1095 1-0</div>
<div class="c" style="left:759px;top:409px;width:95px;height:17px">Fornecedores Nacio</div>
<div class="c" style="left:854px;top:409px;width:95px;height:17px">RADIO PRATA FM</div>
<div class="h" style="left:14px;top:426px;width:22px;height:17px;line-height:17px;"></div>
<div class="h" style="left:36px;top:426px;width:44px;height:17px"><span class="cb"></span></div>
<div class="c n" style="left:80px;top:426px;width:67px;height:17px">04/11/2013</div>
<div class="c n" style="left:147px;top:426px;width:65px;height:17px">04/11/2013</div>
<div class="c n" style="left:212px;top:426px;width:80px;height:17px">20/04/2016</div>
<div class="c w" style="left:292px;top:426px;width:80px;height:17px"></div>
<div class="c r n" style="left:372px;top:426px;width:65px;height:17px">82.225,00</div>
<div class="c r n" style="left:437px;top:426px;width:80px;height:17px">82.225,00</div>
<div class="c w" style="left:517px;top:426px;width:80px;height:17px"></div>
<div class="c n" style="left:597px;top:426px;width:29px;height:17px">001</div>
<div class="c" style="left:626px;top:426px;width:38px;height:17px">Pagame</div>
<div class="c d" style="left:664px;top:426px;width:95px;height:17px">1/112013 1-1</div>
<div class="c" style="left:759px;top:426px;width:95px;height:17px">Títulos a Pagar (2.1</div>
<div class="c" style="left:854px;top:426px;width:95px;height:17px">FOLHA DE PAGAM</div>
<div style="left:14px;top:443px;width:936px;height:1px;background:#fff"></div>
<div style="left:949px;top:323px;width:1px;height:121px;background:#fff"></div>
<!-- scrollbar -->
<div style="left:956px;top:323px;width:16px;height:126px;background:conic-gradient(#fff 25%,#d4d0c8 0 50%,#fff 0 75%,#d4d0c8 0);background-size:2px 2px"></div>
<div class="sb" style="left:956px;top:323px"></div>
<div class="sb" style="left:956px;top:339px"></div>
<div class="sb" style="left:956px;top:433px"></div>
<svg width="1014" height="455" viewBox="0 0 1014 455" style="position:absolute;left:0;top:0">
<!-- title icon -->
<g>
<rect x="9.5" y="8" width="7" height="9.5" rx="1" fill="#58b8e8"/>
<rect x="10.5" y="8.6" width="5.5" height="1.6" fill="#e8e8f0"/>
<path d="M11 11 q2.5 -1.5 4.5 0 q1 2.5 -0.5 4.500 q-2.500 1.200 -4 -0.500 q-1 -2 0 -4z" fill="#18a040"/>
<path d="M12 14 q1.500 0.800 2.800 -0.200 l0.200 1.800 q-1.600 0.800 -3 -0.200z" fill="#1060c0"/>
<path d="M6 10.500 h1.300 v-1.600 h1.600 v1.600 h1.300 v2 h-1.300 v1.400 h-1.600 v-1.400 h-1.300z" fill="#e83818"/>
<rect x="6.200" y="14.600" width="3.600" height="1.400" fill="#e83030"/>
<path d="M17.500 5.200 q4.800 -0.200 3.600 4.600 q-1.800 6.200 -7.600 8.800" fill="none" stroke="#d8d8d8" stroke-width="1.100"/>
<path d="M16 6.500 q-2.500 2 -3 4" fill="none" stroke="#a8b0c0" stroke-width="0.700"/>
</g>
<!-- window buttons glyphs -->
<rect x="962" y="14" width="6" height="2" fill="#000"/>
<path d="M977 7h9v9h-9z M978 9v6h7v-6z" fill="#000" fill-rule="evenodd"/>
<path d="M996.500 8.200l6.500 6.300M1003 8.200l-6.500 6.300" stroke="#000" stroke-width="1.700" fill="none"/>
<!-- printer -->
<g>
<path d="M825.300 26 l5.800 0.700 l1.700 5.200 l-5.600 1z" fill="#a8d0ff" stroke="#6a86e0" stroke-width="0.500"/>
<path d="M826.800 27.200 l2.600 0.300 l1.500 4.300 l-2.700 0.500z" fill="#e4f2ff"/>
<path d="M824.300 35.300 q-0.300 -2.300 3 -3 l4.500 -0.700 q4.500 0.600 5.200 3 l0 2.700 q-2.400 3.600 -7.400 3.500 q-4.300 -1.300 -5.300 -5.500z" fill="#d4d4d4" stroke="#585858" stroke-width="0.800"/>
<path d="M825 34.600 q2 -2 6.500 -2.400 q4 0.500 5 2.300 q-3 2.300 -6.500 2.500 q-3.500 -0.300 -5 -2.400z" fill="#f6f6f6" stroke="#a0a0a0" stroke-width="0.400"/>
<path d="M825.300 37.300 q2.500 2.600 5 2.700 q3.500 -0.400 6 -2.700" fill="none" stroke="#fff" stroke-width="1.100"/>
<path d="M830.500 40.200 l2.500 -0.300" stroke="#3040a0" stroke-width="1"/>
<rect x="835.600" y="35.700" width="1.100" height="1.300" fill="#50c050"/>
</g>
<polygon points="859,40 864,40 861.500,43" fill="#000"/>
<!-- atualizar -->
<g>
<rect x="886.300" y="27" width="4.400" height="6.300" fill="#f0e000" stroke="#b0a000" stroke-width="0.500"/>
<rect x="886" y="26.200" width="4.600" height="1" fill="#6060c0"/>
<rect x="892.300" y="35.200" width="4.400" height="5.300" fill="#f0e000" stroke="#b0a000" stroke-width="0.500"/>
<rect x="892.300" y="34.400" width="3.400" height="1" fill="#c8c8e8"/>
<path d="M892.300 28.300 l3.200 -1.300 l-0.300 1.400 q2.800 1.800 1.800 5.400 l-1.500 -0.300 q0.600 -2.600 -1.300 -3.700 l-0.500 1.200z" fill="#10b050" stroke="#087030" stroke-width="0.400"/>
<path d="M889.800 40 l-3.200 1.100 l0.300 -1.400 q-2.600 -1.800 -1.800 -5.400 l1.500 0.300 q-0.500 2.600 1.300 3.700 l0.600 -1.100z" fill="#10c8d8" stroke="#0890a0" stroke-width="0.400"/>
</g>
<!-- filtros -->
<g>
<path d="M930.800 30.500 l3.200 -3.800 l8.200 -0.500 l2.800 4 l-6.800 11.300z" fill="#b89020" stroke="#3a2800" stroke-width="1"/>
<path d="M934 27 l8 -0.500 l1.800 3 l-5.300 1.800 l-5.800 -1.300z" fill="#ecd880"/>
<path d="M936.500 27.300 l4.800 -0.400 l1.300 1.600 l-3.600 1.100z" fill="#ffffff"/>
<path d="M933 31 l5.300 1.300 l-0.200 8 z" fill="#d8b840"/>
<path d="M938.500 32 l4.800 -1.500 l-4.800 9.500z" fill="#8a6810"/>
<path d="M938 29.500 q2 1 1.500 4" fill="none" stroke="#705010" stroke-width="0.700"/>
</g>
<!-- ok check -->
<path d="M979.300 34.200 l2 -0.900 l2.900 3.300 q3 -5 7.200 -8.300 l0.500 0.500 q-4.200 4.800 -7.200 11.700 l-1.100 0z" fill="#28c428" stroke="#189818" stroke-width="0.300"/>
<!-- grid sort icon -->
<g>
<rect x="17.500" y="340.500" width="5" height="6" fill="#fff" stroke="#000"/>
<path d="M19.300 341.200 l6.200 -6.200 l1.600 1.600 l-6.200 6.200 l-2 0.400z" fill="#f8e820" stroke="#000" stroke-width="0.700"/>
<path d="M25.200 335.300 l0.800 -0.800 q1.200 -0.400 1.600 1.600 l-0.800 0.800z" fill="#f00000"/>
<path d="M22 342.500 l5 -5" stroke="#00c0d0" stroke-width="0.900"/>
<path d="M28 334.500 h3 v8 h2 l-3.500 4.300 l-3.500 -4.300 h2z" fill="#fff" stroke="#0000a0" stroke-width="0.900"/>
<rect x="28.500" y="335" width="2" height="8" fill="#0000c0"/>
</g>
<!-- row indicator -->
<polygon points="22,360 28,365.800 22,371.600" fill="#000"/>
<!-- lightning -->
<g>
<path d="M992.500 323.800 L981.500 327.400 L979.500 333 L984.800 332.200 L979.800 339.200 L991.500 329.400 L987 330z" fill="#ff9000" stroke="#e06000" stroke-width="0.500"/>
<path d="M990 325.600 L982.500 328.200 L981.300 331.600 L986.800 330.800 L983 336 L989 330.600 L985.500 330.800z" fill="#ffee20"/>
</g>
<polygon points="1001,331 1006,331 1003.500,334" fill="#000"/>
<!-- scrollbar arrows -->
<polygon points="960,333 967,333 963.500,329" fill="#000"/>
<polygon points="960,439 967,439 963.500,443" fill="#000"/>
</svg>

</div>
</body></html>
